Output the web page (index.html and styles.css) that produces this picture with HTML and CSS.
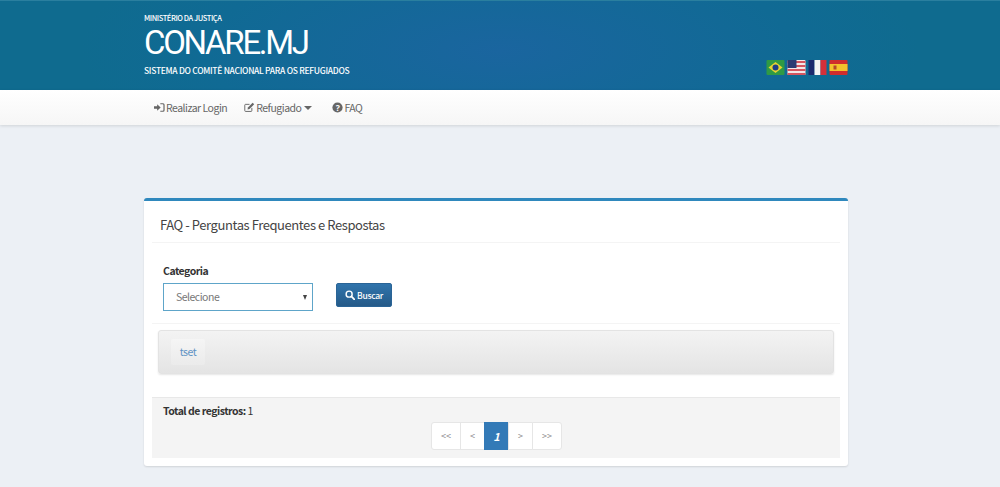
FILE: index.html
```html
<!DOCTYPE html>
<html lang="pt">
<head>
<meta charset="utf-8">
<title>CONARE.MJ</title>
<link rel="stylesheet" href="styles.css">
</head>
<body>
<header class="top">
  <div class="wrap top-inner">
    <div class="brand">
      <div class="ministry">MINISTÉRIO DA JUSTIÇA</div>
      <div class="logo">CONARE.MJ</div>
      <div class="subtitle">SISTEMA DO COMITÊ NACIONAL PARA OS REFUGIADOS</div>
    </div>
    <div class="flags">
      <svg class="flag" viewBox="0 0 18 15"><rect width="18" height="15" rx="1" fill="#2f9a45"/><path d="M9 2 16 7.500 9 13 2 7.500z" fill="#e8d430"/><circle cx="9" cy="7.500" r="3" fill="#1d3f86"/></svg>
      <svg class="flag" viewBox="0 0 18 15"><rect width="18" height="15" rx="1" fill="#f3e6e6"/><path d="M0 1h18v2H0zM0 5h18v2H0zM0 9h18v2H0zM0 13h18v2H0z" fill="#d4545f"/><rect width="9" height="8" fill="#2c3a72"/></svg>
      <svg class="flag" viewBox="0 0 18 15"><rect width="6" height="15" fill="#1c2a6e"/><rect x="6" width="6" height="15" fill="#f5f5f5"/><rect x="12" width="6" height="15" fill="#d5303a"/></svg>
      <svg class="flag" viewBox="0 0 18 15"><rect width="18" height="15" rx="1" fill="#cf2d2d"/><rect y="4" width="18" height="7" fill="#f3c22c"/><rect x="4" y="5.500" width="3" height="4" fill="#b5482a"/></svg>
    </div>
  </div>
</header>
<nav class="menu">
  <div class="wrap menu-inner">
    <a class="menu-item">
      <svg class="ico" viewBox="0 0 14 14"><path d="M0 5.500h4V3l4.500 4L4 11V8.500H0z" fill="#666"/><path d="M8 1.500h3.500a2 2 0 0 1 2 2v7a2 2 0 0 1-2 2H8v-1.500h3.200a.8.8 0 0 0 .8-.8V3.800a.8.8 0 0 0-.8-.8H8z" fill="#666"/></svg>
      Realizar Login
    </a>
    <a class="menu-item">
      <svg class="ico" viewBox="0 0 14 14"><path d="M10 7.500V11a1 1 0 0 1-1 1H2a1 1 0 0 1-1-1V4a1 1 0 0 1 1-1h5" fill="none" stroke="#666" stroke-width="1.200"/><path d="M4.500 9.500 5 7l6-6 2 2-6 6z" fill="#666"/></svg>
      Refugiado <span class="caret"></span>
    </a>
    <a class="menu-item">
      <svg class="ico" viewBox="0 0 14 14"><circle cx="7" cy="7" r="6.500" fill="#666"/><text class="qmark" x="7" y="11" text-anchor="middle">?</text></svg>
      FAQ
    </a>
  </div>
</nav>
<main class="wrap">
  <section class="panel">
    <h1 class="panel-title">FAQ - Perguntas Frequentes e Respostas</h1>
    <form class="filter">
      <div class="field">
        <label class="field-label">Categoria</label>
        <div class="select">Selecione<span class="select-arrow"></span></div>
      </div>
      <button class="btn" type="button">
        <svg class="btn-ico" viewBox="0 0 14 14"><circle cx="5.800" cy="5.800" r="4.200" fill="none" stroke="#fff" stroke-width="2"/><path d="m9 9 4 4" stroke="#fff" stroke-width="2.400" stroke-linecap="round"/></svg>
        Buscar
      </button>
    </form>
    <div class="accordion"><a class="tag">tset</a></div>
    <footer class="panel-foot">
      <div class="total"><strong>Total de registros:</strong> 1</div>
      <div class="pager">
        <a class="page">&lt;&lt;</a>
        <a class="page">&lt;</a>
        <a class="page current">1</a>
        <a class="page">&gt;</a>
        <a class="page">&gt;&gt;</a>
      </div>
    </footer>
  </section>
</main>
</body>
</html>
```
FILE: styles.css
```css
* { box-sizing: border-box; }
html, body { margin: 0; padding: 0; }
body {
  height: 487px;
  overflow: hidden;
  background: #ecf0f5;
  color: #333;
  font-family: "Noto Sans CJK SC", "Noto Sans", sans-serif;
  font-size: 10.500px;
  letter-spacing: -.5px;
}
.wrap { width: 704px; margin-left: 144px; }
.top {
  height: 90px;
  border-top: 1px solid #2a7f9f;
  background: radial-gradient(ellipse 420px 140px at 500px 50px, #1a659f 0%, #106a94 70%, #0f6b8f 100%);
}
.top-inner { display: flex; justify-content: space-between; align-items: flex-end; height: 100%; }
.brand { color: #fff; padding-top: 12px; height: 100%; }
.ministry { font-size: 7.500px; line-height: 10px; font-weight: 500; letter-spacing: -.42px; }
.logo {
  font-family: "Roboto", "Liberation Sans", sans-serif;
  font-weight: 400;
  font-size: 33px;
  line-height: 37px;
  letter-spacing: -2.300px;
  margin-top: 1px;
}
.subtitle { font-size: 8.500px; line-height: 12px; font-weight: 500; margin-top: 3px; letter-spacing: -.3px; }
.flags { display: flex; gap: 2px; padding-bottom: 15px; }
.flag { width: 19px; height: 15px; display: block; }
.menu {
  height: 35px;
  background: linear-gradient(#fff, #f6f6f6);
  box-shadow: 0 1px 3px rgba(0, 0, 0, .12);
}
.menu-inner { display: flex; align-items: center; height: 100%; padding-left: 10px; }
.menu-item { display: flex; align-items: center; color: #666; line-height: 16px; margin-right: 17px; white-space: nowrap; }
.menu-item:nth-child(2) { margin-right: 20px; }
.ico { width: 11px; height: 11px; margin-right: 1px; }
.qmark { font-size: 11px; font-weight: 700; fill: #fff; font-family: "Noto Sans", sans-serif; }
.caret {
  display: inline-block;
  margin-left: 3px;
  border-left: 4px solid transparent;
  border-right: 4px solid transparent;
  border-top: 4px solid #666;
}
.panel {
  margin-top: 73px;
  height: 268px;
  background: #fff;
  border-top: 3px solid #2f88bd;
  border-radius: 3px;
  box-shadow: 0 1px 2px rgba(0, 0, 0, .12);
  padding: 0 8px;
}
.panel-title {
  margin: 0;
  height: 42px;
  padding: 14px 8px 0;
  font-size: 13px;
  line-height: 20px;
  font-weight: 400;
  letter-spacing: -.42px;
  color: #444;
  border-bottom: 1px solid #f4f4f4;
}
.filter {
  display: flex;
  align-items: flex-end;
  gap: 23px;
  height: 81px;
  padding: 22px 0 0 11px;
  border-bottom: 1px solid #f4f4f4;
}
.field { width: 150px; padding-bottom: 12px; }
.field-label { display: block; font-weight: 700; line-height: 15px; margin-bottom: 5px; color: #333; }
.select {
  position: relative;
  height: 28px;
  border: 1px solid #5ea5c9;
  padding-left: 12px;
  line-height: 26px;
  color: #777;
}
.select-arrow {
  position: absolute;
  right: 5px;
  top: 11px;
  border-left: 2.500px solid transparent;
  border-right: 2.500px solid transparent;
  border-top: 5px solid #444;
}
.btn {
  display: flex;
  align-items: center;
  justify-content: center;
  gap: 2px;
  width: 56px;
  height: 24px;
  margin-bottom: 16px;
  padding: 0;
  border: 1px solid #2a6496;
  border-radius: 2px;
  background: linear-gradient(#3074ac, #255a88);
  color: #fff;
  font-family: inherit;
  font-size: 8.500px;
  letter-spacing: -.3px;
  font-weight: 500;
}
.btn-ico { width: 10px; height: 10px; }
.accordion {
  height: 44px;
  margin: 6px 6px 0;
  padding: 8px 12px;
  background: linear-gradient(#f3f3f3, #e4e4e4);
  border: 1px solid #e3e3e3;
  border-radius: 3px;
  box-shadow: 0 1px 2px rgba(0, 0, 0, .1);
}
.tag {
  display: block;
  width: 34px;
  height: 26px;
  text-align: center;
  line-height: 26px;
  color: #5f93c4;
  background: linear-gradient(#f5f5f5, #ebebeb);
  border-radius: 2px;
}
.panel-foot {
  height: 61px;
  margin-top: 23px;
  background: #f4f4f4;
  border-top: 1px solid #e8e8e8;
  padding: 5px 11px 0;
}
.total { line-height: 15px; color: #333; }
.pager { display: flex; justify-content: center; margin-top: 4px; padding-left: 2px; }
.page {
  width: 30px;
  height: 28px;
  margin-left: -1px;
  background: #fff;
  border: 1px solid #e6e6e6;
  text-align: center;
  font-size: 9px;
  letter-spacing: 0;
  line-height: 26px;
  color: #888;
}
.page:nth-child(2) { width: 25px; }
.page:nth-child(4) { width: 25px; }
.page:first-child { border-radius: 3px 0 0 3px; }
.page:last-child { border-radius: 0 3px 3px 0; }
.page.current {
  width: 25px;
  background: #337ab7;
  border-color: #337ab7;
  color: #fff;
  font-size: 11px;
  font-style: italic;
  font-weight: 700;
}
```
